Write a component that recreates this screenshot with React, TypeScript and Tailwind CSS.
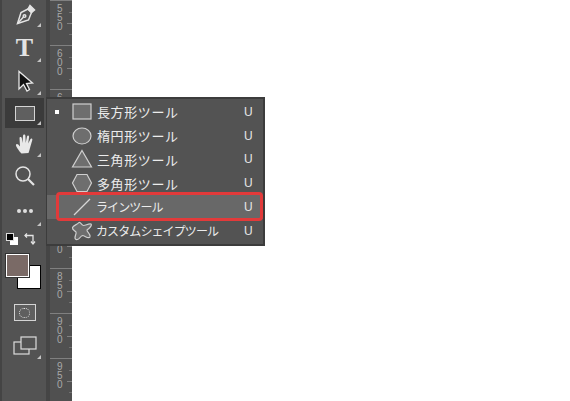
import type { ReactNode } from "react";

const jp = { fontFamily: '"Noto Sans CJK JP", "Noto Sans", sans-serif' };

function Corner() {
  return <span className="absolute right-[3px] bottom-[3px] w-0 h-0 border-l-[4px] border-l-transparent border-b-[4px] border-b-[#c4c4c4]" />;
}

function Tool({ h, active, corner = true, children }: { h: number; active?: boolean; corner?: boolean; children: ReactNode }) {
  return (
    <div style={{ height: h }} className={`relative flex items-center justify-center ml-[3px] mr-[2px] ${active ? "bg-[#3b3b3b]" : ""}`}>
      {children}
      {corner && <Corner />}
    </div>
  );
}

const shapeIcons: Record<string, ReactNode> = {
  rect: <rect x="2" y="2" width="18" height="15" fill="#6e6e6e" stroke="#cfcfcf" strokeWidth="1.2" />,
  ellipse: <ellipse cx="11" cy="10" rx="9" ry="8" fill="#6e6e6e" stroke="#cfcfcf" strokeWidth="1.2" />,
  triangle: <path d="M11 1.5 L20.5 18 H1.5 Z" fill="#6e6e6e" stroke="#cfcfcf" strokeWidth="1.2" />,
  hexagon: <path d="M6 1.5 H16 L20.5 10 L16 18.5 H6 L1.5 10 Z" fill="#6e6e6e" stroke="#cfcfcf" strokeWidth="1.2" />,
  line: <path d="M3 18 L19 2" fill="none" stroke="#d6d6d6" strokeWidth="1.2" />,
  custom: <path d="M8 1.5 C10 1 10.5 4.5 12.5 4.5 C15 4.5 17 2.5 20 3 C21.5 4.5 18 7.5 16 9 C15.5 11 20 13 19 16 C17 18.5 14 14.5 11.5 14.5 C9 15 8.5 19.5 5 18.5 C2 17 6 13 5 11 C4 9.5 1 9 1.5 6.5 C2.5 4 6 4 8 1.5 Z" fill="#6e6e6e" stroke="#cfcfcf" strokeWidth="1.2" />,
};

const menu = [
  { icon: "rect", label: "長方形ツール", checked: true, wide: true },
  { icon: "ellipse", label: "楕円形ツール", wide: true },
  { icon: "triangle", label: "三角形ツール", wide: true },
  { icon: "hexagon", label: "多角形ツール", wide: true },
  { icon: "line", label: "ラインツール", active: true },
  { icon: "custom", label: "カスタムシェイプツール" },
];

const rulerMarks = ["550", "600", "650", "700", "750", "800", "850", "900", "950"];

function Ruler() {
  return (
    <div className="w-[22px] shrink-0 bg-[#505050] overflow-hidden flex flex-col">
      {rulerMarks.map((m) => (
        <div key={m} className="h-[44.7px] shrink-0 border-t border-[#808080] pl-[7px] pt-[3px] relative" style={{ fontFamily: '"Liberation Sans", sans-serif' }}>
          <div className="w-[6px] break-all text-[10px] leading-[9px] text-[#a8a8a8]">{m}</div>
          <span className="absolute right-0 top-[22px] w-[5px] h-px bg-[#808080]" />
          <span className="absolute right-0 top-[11px] w-[3px] h-px bg-[#707070]" />
          <span className="absolute right-0 top-[33px] w-[3px] h-px bg-[#707070]" />
        </div>
      ))}
    </div>
  );
}

export default function App() {
  return (
    <div className="relative w-[570px] h-[401px] flex bg-white overflow-hidden" style={jp}>
      <div className="w-[46px] shrink-0 bg-[#535353] border-l-2 border-[#444444] flex flex-col">
        <Tool h={30}>
          <svg width="24" height="24" viewBox="0 0 24 24" fill="none" stroke="#e4e4e4" strokeWidth="1.5">
            <path d="M17 2.5 L21.5 7 L18.5 9.5 L15 6 Z" fill="#e4e4e4" />
            <path d="M15 6 L18.5 9.5 L15.5 17 L4.5 20.5 L8 9.5 Z" />
            <path d="M4.5 20.5 L10.5 14" />
            <circle cx="11.5" cy="13" r="1.3" />
          </svg>
        </Tool>
        <Tool h={35}>
          <span className="text-[26px] leading-none font-bold text-[#e4e4e4]" style={{ fontFamily: '"Liberation Serif", serif' }}>T</span>
        </Tool>
        <Tool h={33}>
          <svg width="22" height="22" viewBox="0 0 22 22" className="-translate-y-[1px]">
            <path d="M5 1.5 L5 19 L9.5 14.5 L13 21 L15.5 19.5 L12.5 13.5 L18.5 13 Z" fill="#111111" stroke="#e8e8e8" strokeWidth="1.3" />
          </svg>
        </Tool>
        <Tool h={30} active>
          <span className="w-[20px] h-[15px] bg-[#5f5f5f] border border-[#d4d4d4]" />
        </Tool>
        <Tool h={32}>
          <svg width="22" height="22" viewBox="0 0 22 22" fill="#e8e8e8">
            <path d="M6 19 C4 16 1.5 13 2 11.5 C3 10 5 12 6 13.5 L5.5 5 C5.5 3.5 7.5 3.5 7.8 5 L8.5 10 L9 2.8 C9.3 1.2 11.2 1.2 11.4 2.8 L11.7 10 L13 3.5 C13.4 2 15.2 2.3 15.1 4 L14.2 10.5 L16.5 6 C17.2 4.8 18.8 5.5 18.3 7 L16 15 C15.5 17 15 18.5 14.5 20 L7.5 20.5 Z" />
          </svg>
        </Tool>
        <Tool h={32} corner={false}>
          <svg width="24" height="24" viewBox="0 0 24 24" fill="none" stroke="#e4e4e4">
            <circle cx="10" cy="10" r="7" strokeWidth="1.5" />
            <path d="M15 15 L21 21" strokeWidth="2.2" />
          </svg>
        </Tool>
        <Tool h={37}>
          <div className="flex gap-[2px]">
            <span className="w-[4px] h-[4px] rounded-full bg-[#dedede]" />
            <span className="w-[4px] h-[4px] rounded-full bg-[#dedede]" />
            <span className="w-[4px] h-[4px] rounded-full bg-[#dedede]" />
          </div>
        </Tool>
        <div className="h-[20px] ml-[4px] flex items-center gap-[6px]">
          <span className="relative w-[12px] h-[12px]">
            <span className="absolute right-0 bottom-0 w-[8px] h-[8px] bg-white" />
            <span className="absolute left-0 top-0 w-[8px] h-[8px] bg-black border border-[#dddddd]" />
          </span>
          <svg width="14" height="14" viewBox="0 0 14 14" fill="none" stroke="#e4e4e4" strokeWidth="1.3">
            <path d="M1 3.5 H9 V11" />
            <path d="M3 1.5 L1 3.5 L3 5.5" />
            <path d="M7 9.5 L9 12 L11 9.5" />
          </svg>
        </div>
        <div className="relative h-[42px] mt-[5px]">
          <span className="absolute left-[15px] top-[11px] w-[24px] h-[24px] bg-white border border-black" />
          <span className="absolute left-[4px] top-0 w-[23px] h-[23px] bg-[#7a6a66] border border-white outline outline-[#333333]" />
        </div>
        <Tool h={33} corner={false}>
          <span className="w-[22px] h-[17px] bg-[#5f5f5f] border border-[#d4d4d4] flex items-center justify-center">
            <span className="w-[11px] h-[10px] rounded-full border border-dotted border-[#e4e4e4]" />
          </span>
        </Tool>
        <Tool h={33}>
          <svg width="24" height="20" viewBox="0 0 24 20" fill="none" stroke="#dcdcdc" strokeWidth="1.2">
            <rect x="1" y="6" width="15" height="12" />
            <rect x="8" y="1" width="15" height="12" fill="#535353" />
          </svg>
        </Tool>
      </div>
      <div className="w-[4px] shrink-0 bg-[#454545]" />
      <Ruler />
      <div className="flex-1 bg-white" />

      {/* flyout */}
      <div className="absolute left-[46px] top-[97px] w-[219px] h-[149px] bg-[#535353] border-[2px] border-l-[1px] border-[#3c3c3c] pt-[1px]">
        {menu.map((m) => (
          <div key={m.label} className={`relative h-[23.8px] flex items-center ${m.active ? "bg-[#686868]" : ""}`}>
            {m.checked && <span className="absolute left-[8px] w-[4px] h-[4px] bg-white" />}
            <svg width="22" height="20" viewBox="0 0 22 20" className="ml-[24px] shrink-0">
              {shapeIcons[m.icon]}
            </svg>
            <span className={`text-[#ececec] whitespace-nowrap ${m.wide ? "ml-[4px] text-[13px] tracking-[0.6px]" : "ml-[3px] text-[12px] tracking-[-0.9px]"}`}>
              {m.label}
            </span>
            <span className="absolute left-[197px] text-[12px] text-[#e6e6e6]" style={{ fontFamily: '"Liberation Sans", sans-serif' }}>U</span>
          </div>
        ))}
      </div>
      {/* red annotation */}
      <div className="absolute left-[56px] top-[192px] w-[207px] h-[29px] rounded-[4px] border-[3px] border-[#e23a3a]" />
    </div>
  );
}
